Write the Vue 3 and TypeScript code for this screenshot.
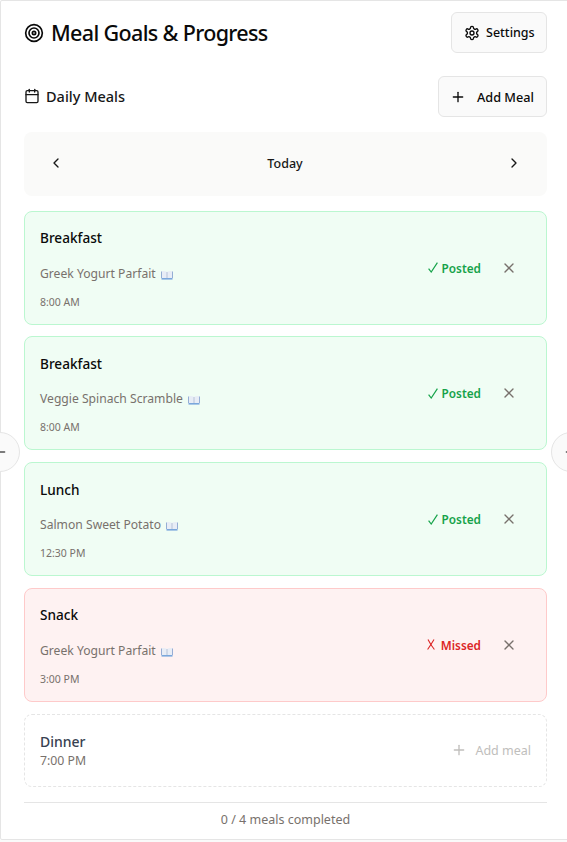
<script setup lang="ts">
interface Meal {
  title: string
  recipe: string
  time: string
  status: 'posted' | 'missed'
}
const meals: Meal[] = [
  { title: 'Breakfast', recipe: 'Greek Yogurt Parfait', time: '8:00 AM', status: 'posted' },
  { title: 'Breakfast', recipe: 'Veggie Spinach Scramble', time: '8:00 AM', status: 'posted' },
  { title: 'Lunch', recipe: 'Salmon Sweet Potato', time: '12:30 PM', status: 'posted' },
  { title: 'Snack', recipe: 'Greek Yogurt Parfait', time: '3:00 PM', status: 'missed' },
]
</script>

<template>
  <div class="viewport">
    <div class="panel">
      <header class="head">
        <h1 class="title">
          <svg class="target" width="20" height="20" viewBox="0 0 24 24" fill="none" stroke="currentColor" stroke-width="2">
            <circle cx="12" cy="12" r="10" />
            <circle cx="12" cy="12" r="6" />
            <circle cx="12" cy="12" r="2" />
          </svg>
          <span>Meal Goals &amp; Progress</span>
        </h1>
        <button class="btn settings">
          <svg width="16" height="16" viewBox="0 0 24 24" fill="none" stroke="currentColor" stroke-width="2" stroke-linecap="round" stroke-linejoin="round">
            <path d="M12.22 2h-.44a2 2 0 0 0-2 2v.18a2 2 0 0 1-1 1.73l-.43.25a2 2 0 0 1-2 0l-.15-.08a2 2 0 0 0-2.73.73l-.22.38a2 2 0 0 0 .73 2.73l.15.1a2 2 0 0 1 1 1.72v.51a2 2 0 0 1-1 1.74l-.15.09a2 2 0 0 0-.73 2.73l.22.38a2 2 0 0 0 2.73.73l.15-.08a2 2 0 0 1 2 0l.43.25a2 2 0 0 1 1 1.73V20a2 2 0 0 0 2 2h.44a2 2 0 0 0 2-2v-.18a2 2 0 0 1 1-1.73l.43-.25a2 2 0 0 1 2 0l.15.08a2 2 0 0 0 2.73-.73l.22-.39a2 2 0 0 0-.73-2.73l-.15-.08a2 2 0 0 1-1-1.74v-.5a2 2 0 0 1 1-1.74l.15-.09a2 2 0 0 0 .73-2.73l-.22-.38a2 2 0 0 0-2.73-.73l-.15.08a2 2 0 0 1-2 0l-.43-.25a2 2 0 0 1-1-1.73V4a2 2 0 0 0-2-2z" />
            <circle cx="12" cy="12" r="3" />
          </svg>
          <span>Settings</span>
        </button>
      </header>

      <div class="sub">
        <h2 class="subtitle">
          <svg width="16" height="16" viewBox="0 0 24 24" fill="none" stroke="currentColor" stroke-width="2" stroke-linecap="round" stroke-linejoin="round">
            <path d="M8 2v4" />
            <path d="M16 2v4" />
            <rect x="3" y="4" width="18" height="18" rx="2" />
            <path d="M3 10h18" />
          </svg>
          <span>Daily Meals</span>
        </h2>
        <button class="btn add">
          <svg width="16" height="16" viewBox="0 0 24 24" fill="none" stroke="currentColor" stroke-width="2" stroke-linecap="round" stroke-linejoin="round">
            <path d="M5 12h14" />
            <path d="M12 5v14" />
          </svg>
          <span>Add Meal</span>
        </button>
      </div>

      <div class="nav">
        <svg width="16" height="16" viewBox="0 0 24 24" fill="none" stroke="currentColor" stroke-width="2" stroke-linecap="round" stroke-linejoin="round">
          <path d="m15 18-6-6 6-6" />
        </svg>
        <span class="today">Today</span>
        <svg width="16" height="16" viewBox="0 0 24 24" fill="none" stroke="currentColor" stroke-width="2" stroke-linecap="round" stroke-linejoin="round">
          <path d="m9 18 6-6-6-6" />
        </svg>
      </div>

      <div class="list">
        <article v-for="(m, i) in meals" :key="i" class="meal" :class="m.status">
          <div class="info">
            <div class="meal-title">{{ m.title }}</div>
            <div class="recipe">
              <span>{{ m.recipe }}</span>
              <svg class="book" width="12" height="12" viewBox="0 0 12 12">
                <path d="M0.5 2.5 C2 1.8 4.2 1.8 6 3 C7.8 1.8 10 1.8 11.5 2.5 V10 H0.5 Z" fill="#e8edf6" />
                <path d="M6 3 V9" stroke="#a9b9d3" stroke-width="0.8" />
                <path d="M0.5 9 H11.5 V10.6 H0.5 Z" fill="#7aa7dc" />
                <path d="M0.5 2.5 V9 M11.5 2.5 V9" stroke="#7f9ccb" stroke-width="0.8" />
              </svg>
            </div>
            <div class="time">{{ m.time }}</div>
          </div>
          <div class="state">
            <span v-if="m.status === 'posted'" class="badge">
              <svg width="10" height="11" viewBox="0 0 10 11" fill="none" stroke="currentColor" stroke-width="1.2">
                <path d="M0.6 6.6 L3.2 10 L9.4 0.6" />
              </svg>
              <span>Posted</span>
            </span>
            <span v-else class="badge badge-missed">
              <svg width="8" height="11" viewBox="0 0 8 11" fill="none" stroke="currentColor" stroke-width="1.1">
                <path d="M1 0.5 C2.6 3.6 5 7.6 7.4 10.5" />
                <path d="M7 0.5 C5.2 3.6 2.8 7.4 0.6 10.5" />
              </svg>
              <span>Missed</span>
            </span>
            <svg class="close" width="16" height="16" viewBox="0 0 24 24" fill="none" stroke="currentColor" stroke-width="2" stroke-linecap="round" stroke-linejoin="round">
              <path d="M18 6 6 18" />
              <path d="m6 6 12 12" />
            </svg>
          </div>
        </article>

        <article class="empty">
          <div class="empty-text">
            <div class="empty-title">Dinner</div>
            <div class="empty-time">7:00 PM</div>
          </div>
          <div class="empty-add">
            <svg width="16" height="16" viewBox="0 0 24 24" fill="none" stroke="currentColor" stroke-width="2" stroke-linecap="round" stroke-linejoin="round">
              <path d="M5 12h14" />
              <path d="M12 5v14" />
            </svg>
            <span>Add meal</span>
          </div>
        </article>
      </div>

      <footer class="foot">0 / 4 meals completed</footer>

      <button class="side side-left" aria-label="Previous">
        <svg width="16" height="16" viewBox="0 0 24 24" fill="none" stroke="currentColor" stroke-width="2" stroke-linecap="round">
          <path d="M5 12h14" />
        </svg>
      </button>
      <button class="side side-right" aria-label="Next">
        <svg width="16" height="16" viewBox="0 0 24 24" fill="none" stroke="currentColor" stroke-width="2" stroke-linecap="round">
          <path d="M5 12h14" />
        </svg>
      </button>
    </div>
  </div>
</template>

<style>
html, body { margin: 0; padding: 0; background: #fff; overflow: hidden; }
</style>

<style scoped>
.viewport {
  width: 567px;
  height: 842px;
  overflow: hidden;
  background: #fafafa;
  font-family: "Noto Sans", "Open Sans", sans-serif;
  color: #0a0a0a;
}
.panel {
  position: relative;
  box-sizing: border-box;
  width: 571px;
  height: 840px;
  padding: 11px 23px 0;
  background: #fff;
  border: 1px solid #e5e5e5;
  border-radius: 2px;
}
.head, .sub {
  display: flex;
  align-items: center;
  justify-content: space-between;
}
.title {
  display: flex;
  align-items: center;
  gap: 7px;
  margin: 0;
  font-size: 21.5px;
  font-weight: 500;
  letter-spacing: -0.65px;
}
.target { color: #0a0a0a; }
.btn {
  display: inline-flex;
  align-items: center;
  box-sizing: border-box;
  height: 41px;
  background: #fafafa;
  border: 1px solid #e5e5e5;
  border-radius: 6px;
  color: #0a0a0a;
  font-family: inherit;
  font-size: 12.5px;
  font-weight: 500;
  padding: 0;
}
.settings { width: 96px; gap: 6px; padding-left: 12px; }
.add { width: 109px; gap: 11px; padding-left: 11px; font-size: 12.7px; }
.sub { margin-top: 23px; }
.subtitle {
  display: flex;
  align-items: center;
  gap: 6px;
  margin: 0 0 2px;
  font-size: 14.5px;
  font-weight: 500;
  color: #171717;
}
.nav {
  display: flex;
  align-items: center;
  justify-content: space-between;
  box-sizing: border-box;
  height: 64px;
  margin-top: 15px;
  padding: 0 24.5px 2px 23.5px;
  background: #fafaf9;
  border-radius: 8px;
  color: #171717;
}
.today { font-size: 12.5px; font-weight: 500; }
.list {
  display: flex;
  flex-direction: column;
  gap: 11.8px;
  margin-top: 14.6px;
}
.meal {
  display: flex;
  align-items: center;
  justify-content: space-between;
  box-sizing: border-box;
  height: 114px;
  padding: 0 15px;
  border: 1px solid;
  border-radius: 8px;
}
.meal.posted { background: #f0fdf4; border-color: #bbf7d0; }
.meal.missed { background: #fef2f2; border-color: #fecaca; }
.info { padding-top: 3.5px; }
.meal-title { font-size: 13.6px; font-weight: 500; line-height: 20px; }
.recipe {
  display: flex;
  align-items: center;
  gap: 5px;
  margin-top: 15.5px;
  font-size: 12.15px;
  line-height: 20px;
  color: #78716c;
}
.book { margin-top: 2px; }
.time { margin-top: 9px; font-size: 10.5px; line-height: 18px; color: #78716c; }
.state { display: flex; align-items: center; gap: 20px; }
.badge {
  display: inline-flex;
  align-items: center;
  gap: 4px;
  font-size: 11.8px;
  font-weight: 600;
}
.badge-missed { gap: 6px; }
.posted .badge { color: #16a34a; }
.missed .badge { color: #dc2626; }
.close { color: #78716c; margin-right: 14px; }
.empty {
  display: flex;
  align-items: center;
  justify-content: space-between;
  box-sizing: border-box;
  height: 73px;
  padding: 0 15px;
  border: 1px dashed #e5e5e5;
  border-radius: 8px;
}
.empty-text { padding-top: 1.5px; }
.empty-title { font-size: 14px; font-weight: 500; line-height: 20px; color: #374151; }
.empty-time { font-size: 12.3px; line-height: 18px; color: #78716c; }
.empty-add {
  display: flex;
  align-items: center;
  gap: 8px;
  font-size: 12.5px;
  color: #c0bebc;
}
.foot {
  margin-top: 15px;
  padding-top: 8px;
  border-top: 1px solid #e5e5e5;
  text-align: center;
  font-size: 12.5px;
  line-height: 18px;
  color: #78716c;
}
.side {
  position: absolute;
  top: 431px;
  display: flex;
  align-items: center;
  justify-content: center;
  box-sizing: border-box;
  width: 40px;
  height: 40px;
  padding: 0;
  border-radius: 50%;
  background: #fafafa;
  border: 1px solid #e5e5e5;
  color: #525252;
}
.side-left { left: -21px; }
.side-right { left: 550px; }
</style>
